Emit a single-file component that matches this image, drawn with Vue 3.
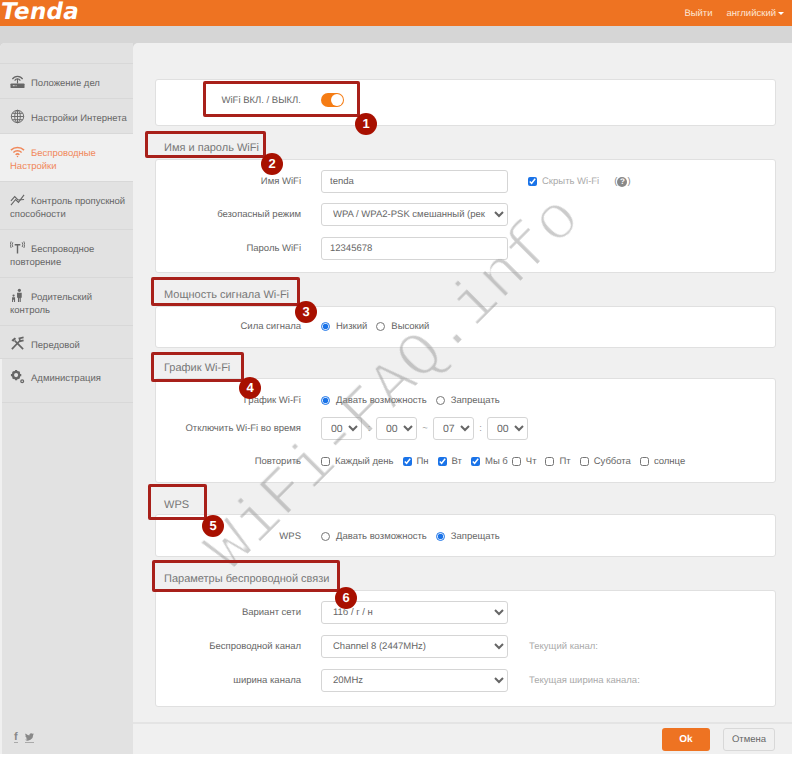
<script setup>
const nav = [
  { id: 'status', text: 'Положение дел', cls: 'h35' },
  { id: 'globe', text: 'Настройки Интернета', cls: 'h35' },
  { id: 'wifi', text: 'Беспроводные Настройки', cls: 'h48 active' },
  { id: 'chart', text: 'Контроль пропускной способности', cls: 'h48' },
  { id: 'ant', text: 'Беспроводное повторение', cls: 'h48' },
  { id: 'family', text: 'Родительский контроль', cls: 'h48' },
  { id: 'tools', text: 'Передовой', cls: 'h33' },
  { id: 'gear', text: 'Администрация', cls: 'h44 inset' }
]
const days = [
  { t: 'Каждый день', c: false },
  { t: 'Пн', c: true },
  { t: 'Вт', c: true },
  { t: 'Мы б', c: true, tight: true },
  { t: 'Чт', c: false },
  { t: 'Пт', c: false },
  { t: 'Суббота', c: false },
  { t: 'солнце', c: false }
]
const frames = [
  { x: 203, y: 81, w: 157, h: 36 },
  { x: 145, y: 131, w: 121, h: 27 },
  { x: 151, y: 277, w: 149, h: 29 },
  { x: 151, y: 352, w: 93, h: 30 },
  { x: 148, y: 484, w: 59, h: 36 },
  { x: 152, y: 560, w: 188, h: 32 }
]
const badges = [
  { n: 1, x: 366, y: 124 },
  { n: 2, x: 272, y: 164 },
  { n: 3, x: 306, y: 312 },
  { n: 4, x: 250, y: 388 },
  { n: 5, x: 213, y: 526 },
  { n: 6, x: 346, y: 598 }
]
const box = f => ({ left: f.x + 'px', top: f.y + 'px', width: f.w + 'px', height: f.h + 'px' })
const pos = b => ({ left: b.x - 11 + 'px', top: b.y - 11 + 'px' })
</script>

<template>
  <div class="page">
    <header class="top">
      <span class="logo">Tenda</span>
      <nav class="top-links">
        <a>Выйти</a>
        <a class="lang">английский<i class="caret"></i></a>
      </nav>
    </header>
    <div class="band"></div>
    <div class="body">
      <aside class="side">
        <div class="side-head"></div>
        <div v-for="n in nav" :key="n.id" class="nav-item" :class="n.cls">
          <p>
            <svg class="ico" viewBox="0 0 16 16" aria-hidden="true">
              <g v-if="n.id === 'status'">
                <rect x="0.5" y="10" width="15" height="5" rx="1" fill="currentColor" />
                <rect x="3" y="12" width="2" height="1" fill="#e2e2e2" />
                <rect x="6" y="12" width="1" height="1" fill="#e2e2e2" />
                <path d="M2.5 5.500a6.500 6.500 0 0 1 11 0M5 7a3.500 3.500 0 0 1 6 0" fill="none" stroke="currentColor" stroke-width="1.300" />
                <path d="M7.400 5h1.200v5H7.400z" fill="currentColor" />
              </g>
              <g v-else-if="n.id === 'globe'" fill="none" stroke="currentColor" stroke-width="1">
                <circle cx="8" cy="8" r="6.600" />
                <ellipse cx="8" cy="8" rx="3" ry="6.600" />
                <path d="M8 1.400v13.200M1.400 8h13.200M2.500 4.600h11M2.500 11.400h11" />
              </g>
              <g v-else-if="n.id === 'wifi'" fill="none" stroke="currentColor" stroke-width="1.600">
                <path d="M1 6.500a10 10 0 0 1 14 0M3.600 9a6.400 6.400 0 0 1 8.800 0M6 11.400a3 3 0 0 1 4 0" />
                <circle cx="8" cy="13.200" r="0.800" fill="currentColor" stroke="none" />
              </g>
              <g v-else-if="n.id === 'chart'" fill="none" stroke="currentColor" stroke-width="1.200">
                <path d="M1 14 6 8l3 3 6-8" />
                <path d="M1 9.500 5 5l3.500 3.500L15 8" />
              </g>
              <g v-else-if="n.id === 'ant'" fill="none" stroke="currentColor" stroke-width="1">
                <path d="M5 5h6M8 5v9.500" stroke-width="1.500" />
                <path d="M3 2.500a5 5 0 0 0 0 5M1.200 1.500a7 7 0 0 0 0 7M13 2.500a5 5 0 0 1 0 5M14.800 1.500a7 7 0 0 1 0 7" />
              </g>
              <g v-else-if="n.id === 'family'" fill="currentColor">
                <circle cx="10" cy="2.500" r="1.700" />
                <path d="M7.500 5h5v5.500h-1V15H10.300v-4H9.700v4H8.500v-4.500h-1z" />
                <circle cx="3.800" cy="8" r="1.200" />
                <path d="M2.200 9.800h3.200V15H4.300v-2.500h-1V15H2.200z" />
              </g>
              <g v-else-if="n.id === 'tools'" fill="none" stroke="currentColor">
                <path d="M2 14 11 4.500" stroke-width="1.800" />
                <path d="M14.500 1.500 10 2.500l1 3 3.500-.8M14 14 5 5" stroke-width="1.800" />
                <path d="M1.500 4.500 5 1.500l1.500 1.500L3.500 6z" fill="currentColor" stroke="none" />
              </g>
              <g v-else fill="currentColor">
                <circle cx="6.500" cy="6.500" r="3.400" fill="none" stroke="currentColor" stroke-width="2.400" />
                <path d="M5.400 1h2.200v2H5.400zM5.400 10h2.200v2H5.400zM1 5.400h2v2.200H1zM10 5.400h2v2.200h-2zM2.200 3.500 3.500 2.200 5 3.600 3.600 5zM8 9.400l1.400-1.400 1.400 1.400-1.400 1.400zM2.200 9.500 3.600 8 5 9.400 3.600 10.800zM8 3.600 9.500 2.200l1.300 1.300L9.400 5z" />
                <circle cx="13" cy="13" r="1.500" fill="none" stroke="currentColor" stroke-width="1.300" />
              </g>
            </svg>{{ n.text }}
          </p>
        </div>
        <div class="side-rest">
          <div class="social">
            <span class="fb">f</span>
            <span class="tw-wrap">
              <svg class="tw" viewBox="0 0 16 14" aria-hidden="true"><path fill="currentColor" d="M16 1.800a6.500 6.500 0 0 1-1.900.5A3.300 3.300 0 0 0 15.500.5a6.500 6.500 0 0 1-2.100.8 3.300 3.300 0 0 0-5.600 3A9.300 9.300 0 0 1 1.100.9a3.300 3.300 0 0 0 1 4.400 3.200 3.200 0 0 1-1.500-.4 3.300 3.300 0 0 0 2.600 3.200 3.300 3.300 0 0 1-1.500.1 3.300 3.300 0 0 0 3 2.300A6.600 6.600 0 0 1 0 11.800 9.300 9.300 0 0 0 14.400 3.500 6.600 6.600 0 0 0 16 1.800z" /></svg>
            </span>
          </div>
        </div>
      </aside>

      <main class="main">
        <div class="content">
          <section class="card c1">
            <div class="row">
              <label class="lbl">WiFi ВКЛ. / ВЫКЛ.</label>
              <span class="toggle"><i></i></span>
            </div>
          </section>

          <h2 class="sec g33">Имя и пароль WiFi</h2>
          <section class="card c2">
            <div class="row r-name">
              <label class="lbl up">Имя WiFi</label>
              <input class="field" value="tenda" />
              <label class="hide"><input type="checkbox" checked />Скрыть Wi-Fi</label>
              <span class="help">(<i>?</i>)</span>
            </div>
            <div class="row r-mode">
              <label class="lbl up">безопасный режим</label>
              <select class="field sel"><option>WPA / WPA2-PSK смешанный (рек</option></select>
            </div>
            <div class="row r-pass">
              <label class="lbl up">Пароль WiFi</label>
              <input class="field" value="12345678" />
            </div>
          </section>

          <h2 class="sec g33">Мощность сигнала Wi-Fi</h2>
          <section class="card c3">
            <div class="row">
              <label class="lbl">Сила сигнала</label>
              <label class="opt"><input type="radio" name="pw" checked />Низкий</label>
              <label class="opt"><input type="radio" name="pw" />Высокий</label>
            </div>
          </section>

          <h2 class="sec g30 pb3">График Wi-Fi</h2>
          <section class="card c4">
            <div class="row r-s1">
              <label class="lbl">График Wi-Fi</label>
              <label class="opt"><input type="radio" name="sc" checked />Давать возможность</label>
              <label class="opt"><input type="radio" name="sc" />Запрещать</label>
            </div>
            <div class="row r-s2">
              <label class="lbl">Отключить Wi-Fi во время</label>
              <select class="time"><option>00</option></select>
              <span class="sep">:</span>
              <select class="time"><option>00</option></select>
              <span class="sep wide">~</span>
              <select class="time"><option>07</option></select>
              <span class="sep narrow">:</span>
              <select class="time"><option>00</option></select>
            </div>
            <div class="row r-s3">
              <label class="lbl">Повторить</label>
              <label v-for="d in days" :key="d.t" class="day" :class="{ tight: d.tight }">
                <input type="checkbox" :checked="d.c" />{{ d.t }}
              </label>
            </div>
          </section>

          <h2 class="sec g31 pb2">WPS</h2>
          <section class="card c5">
            <div class="row">
              <label class="lbl">WPS</label>
              <label class="opt"><input type="radio" name="wps" />Давать возможность</label>
              <label class="opt"><input type="radio" name="wps" checked />Запрещать</label>
            </div>
          </section>

          <h2 class="sec g33">Параметры беспроводной связи</h2>
          <section class="card c6">
            <div class="row r-p1">
              <label class="lbl up">Вариант сети</label>
              <select class="field sel"><option>11б / г / н</option></select>
            </div>
            <div class="row r-p2">
              <label class="lbl up">Беспроводной канал</label>
              <select class="field sel"><option>Channel 8 (2447MHz)</option></select>
              <span class="note">Текущий канал:</span>
            </div>
            <div class="row r-p3">
              <label class="lbl up">ширина канала</label>
              <select class="field sel"><option>20MHz</option></select>
              <span class="note">Текущая ширина канала:</span>
            </div>
          </section>
        </div>
        <footer class="foot">
          <button class="btn ok">Ok</button>
          <button class="btn cancel">Отмена</button>
        </footer>
      </main>
    </div>

    <svg class="defs" aria-hidden="true">
      <filter id="thin" x="-5%" y="-20%" width="110%" height="140%">
        <feMorphology operator="erode" radius="1" />
      </filter>
    </svg>
    <div class="mark">WiFi-FAQ.info</div>
    <div v-for="(f, i) in frames" :key="i" class="frame" :style="box(f)"></div>
    <div v-for="b in badges" :key="b.n" class="badge" :style="pos(b)">{{ b.n }}</div>
  </div>
</template>

<style>
html, body { margin: 0; background: #fff; }
</style>

<style scoped>
.page {
  position: relative;
  width: 792px;
  height: 763px;
  overflow: hidden;
  font-family: "Liberation Sans", Arial, sans-serif;
  font-size: 9.5px;
  text-rendering: geometricPrecision;
  color: #666;
  background: #fff;
}
.page select, .page input, .page button { text-rendering: geometricPrecision; }
.top {
  height: 26px;
  background: #ee7322;
  display: flex;
  justify-content: space-between;
  align-items: center;
  color: #fff;
  overflow: hidden;
}
.logo {
  font-family: "DejaVu Sans", sans-serif;
  font-size: 23px;
  font-weight: 700;
  font-style: italic;
  letter-spacing: 0.300px;
  line-height: 26px;
  padding-left: 1px;
  margin-top: -3px;
}
.top-links { display: flex; gap: 14px; padding-right: 8px; font-size: 9.5px; color: #fde6d5; }
.lang { display: flex; align-items: center; gap: 2px; }
.caret { width: 0; height: 0; border: 3px solid transparent; border-top-color: #fff; border-bottom: 0; }
.band { height: 17px; background: #d6d6d6; }
.body { display: flex; height: 711px; background: #d6d6d6; }
.side {
  width: 133px;
  display: flex;
  flex-direction: column;
  background: #f0f0f0;
  border-top-left-radius: 5px;
  overflow: hidden;
  flex: none;
}
.side-head { height: 21px; background: #e2e2e2; border-bottom: 1px solid #d8d8d8; box-sizing: border-box; }
.nav-item {
  box-sizing: border-box;
  background: #e2e2e2;
  border-bottom: 1px solid #d8d8d8;
  padding: 2px 3px 0 10px;
  display: flex;
  align-items: center;
  color: #666;
}
.nav-item p { margin: 0; line-height: 13.500px; }
.h35 { height: 35px; }
.h48 { height: 48px; }
.h33 { height: 33px; padding-top: 4px; }
.h44 { height: 44px; padding-top: 0; padding-bottom: 7px; }
.inset { margin-left: 2px; padding-left: 8px; }
.active { background: #f0f0f0; color: #f0885a; }
.ico { width: 15px; height: 15px; margin-right: 6px; vertical-align: -3px; }
.side-rest { flex: 1; margin-left: 2px; background: #e2e2e2; display: flex; flex-direction: column; justify-content: flex-end; padding: 0 0 11px 12px; }
.social { display: flex; align-items: flex-end; gap: 7px; color: #888; }
.fb { font-weight: 700; font-size: 11px; line-height: 10px; width: 4px; border-bottom: 1px solid #aaa; }
.tw-wrap { display: block; width: 9px; height: 10px; border-bottom: 1px solid #aaa; }
.tw { display: block; width: 9px; height: 8px; margin-top: 1px; }
.main {
  flex: 1;
  display: flex;
  flex-direction: column;
  background: #f0f0f0;
  border-top-left-radius: 5px;
}
.content { flex: 1; padding: 36px 16px 0 22px; }
.card {
  box-sizing: border-box;
  background: #fff;
  border: 1px solid #e0e0e0;
  border-radius: 3px;
  position: relative;
}
.c1 { height: 47px; padding-top: 13px; }
.c2 { height: 114px; }
.c3 { height: 42px; padding-top: 12px; }
.c4 { height: 105px; }
.c5 { height: 43px; padding-top: 14px; }
.c6 { height: 117px; }
.sec {
  margin: 0;
  box-sizing: border-box;
  font-size: 11px;
  font-weight: 400;
  letter-spacing: 0;
  color: #777;
  padding-left: 9px;
  display: flex;
  align-items: flex-end;
  padding-bottom: 4px;
  line-height: 14px;
}
.g33 { height: 33px; }
.g31 { height: 31px; }
.g30 { height: 30px; }
.pb3 { padding-bottom: 3px; }
.pb2 { padding-bottom: 2px; }
.row { display: flex; align-items: center; height: 14px; }
.lbl { width: 145px; flex: none; text-align: right; margin-right: 20px; }
.up { margin-top: -1px; }
.r-name { margin-top: 10px; height: 23px; }
.r-mode { margin-top: 10px; height: 23px; }
.r-pass { margin-top: 11px; height: 23px; }
.field {
  box-sizing: border-box;
  width: 187px;
  height: 23px;
  flex: none;
  border: 1px solid #d5d5d5;
  border-radius: 3px;
  background: #fff;
  color: #666;
  padding: 0 0 0 8px;
  font: 9.5px "Liberation Sans", Arial, sans-serif;
  outline: none;
}
.sel { padding-left: 7px; }
.hide { display: flex; align-items: center; margin-left: 20px; color: #aaa; }
.hide input, .day input { width: 9px; height: 9px; margin: 0 5px 0 0; accent-color: #1a73e8; }
.help { margin-left: 15px; color: #888; font-size: 9.5px; display: flex; align-items: center; }
.help i {
  width: 10px; height: 10px; border-radius: 50%; background: #888; color: #fff;
  font-style: normal; font-weight: 700; font-size: 8px; line-height: 10px; text-align: center;
}
.toggle {
  width: 23px; height: 14px; border-radius: 7px; background: #f57c14; position: relative; display: block;
}
.toggle i {
  position: absolute; right: 1px; top: 1px; width: 12px; height: 12px; border-radius: 50%; background: #fff;
}
.opt { display: flex; align-items: center; margin-right: 9px; color: #666; }
.opt input { width: 9px; height: 9px; margin: 0 6px 0 0; accent-color: #1a73e8; }
.r-s1 { margin-top: 14px; }
.r-s2 { margin-top: 10px; height: 23px; }
.r-s3 { margin-top: 14px; }
.time {
  box-sizing: border-box;
  width: 41px;
  height: 23px;
  border: 1px solid #d5d5d5;
  border-radius: 3px;
  background: #fff;
  color: #666;
  padding-left: 5px;
  font: 10.500px "Liberation Sans", Arial, sans-serif;
  flex: none;
}
.sep { width: 14px; text-align: center; color: #999; flex: none; }
.wide { width: 16px; }
.narrow { width: 13px; }
.day { display: flex; align-items: center; margin-right: 9px; flex: none; }
.tight { margin-right: 4px; }
.r-p1 { margin-top: 10px; height: 23px; }
.r-p2 { margin-top: 11px; height: 23px; }
.r-p3 { margin-top: 11px; height: 23px; }
.note { margin-left: 21px; color: #aaa; }
.foot {
  height: 32px;
  box-sizing: border-box;
  border-top: 2px solid #e4e4e4;
  display: flex;
  justify-content: flex-end;
  gap: 13px;
  padding: 4px 17px 0 0;
}
.btn {
  height: 23px;
  border-radius: 3px;
  font: 9.5px "Liberation Sans", Arial, sans-serif;
  padding: 0;
  box-sizing: border-box;
}
.ok { width: 48px; background: #ee7322; color: #fff; border: 0; font-weight: 700; font-size: 10px; }
.cancel { width: 52px; background: #f0f0f0; color: #666; border: 1px solid #d8d8d8; }
.defs { position: absolute; width: 0; height: 0; }
.mark {
  position: absolute;
  left: 395px;
  top: 385px;
  font-family: "Liberation Mono", monospace;
  font-size: 64px;
  line-height: 64px;
  white-space: nowrap;
  color: rgba(140, 140, 140, 0.45);
  filter: url(#thin);
  transform: translate(-50%, -50%) rotate(-45deg);
  pointer-events: none;
}
.frame {
  position: absolute;
  box-sizing: border-box;
  border: 3px solid #a8201a;
  border-radius: 2px;
}
.badge {
  position: absolute;
  width: 22px;
  height: 22px;
  border-radius: 50%;
  background: #a81000;
  color: #fff;
  font-weight: 700;
  font-size: 13px;
  line-height: 22px;
  text-align: center;
}
</style>
